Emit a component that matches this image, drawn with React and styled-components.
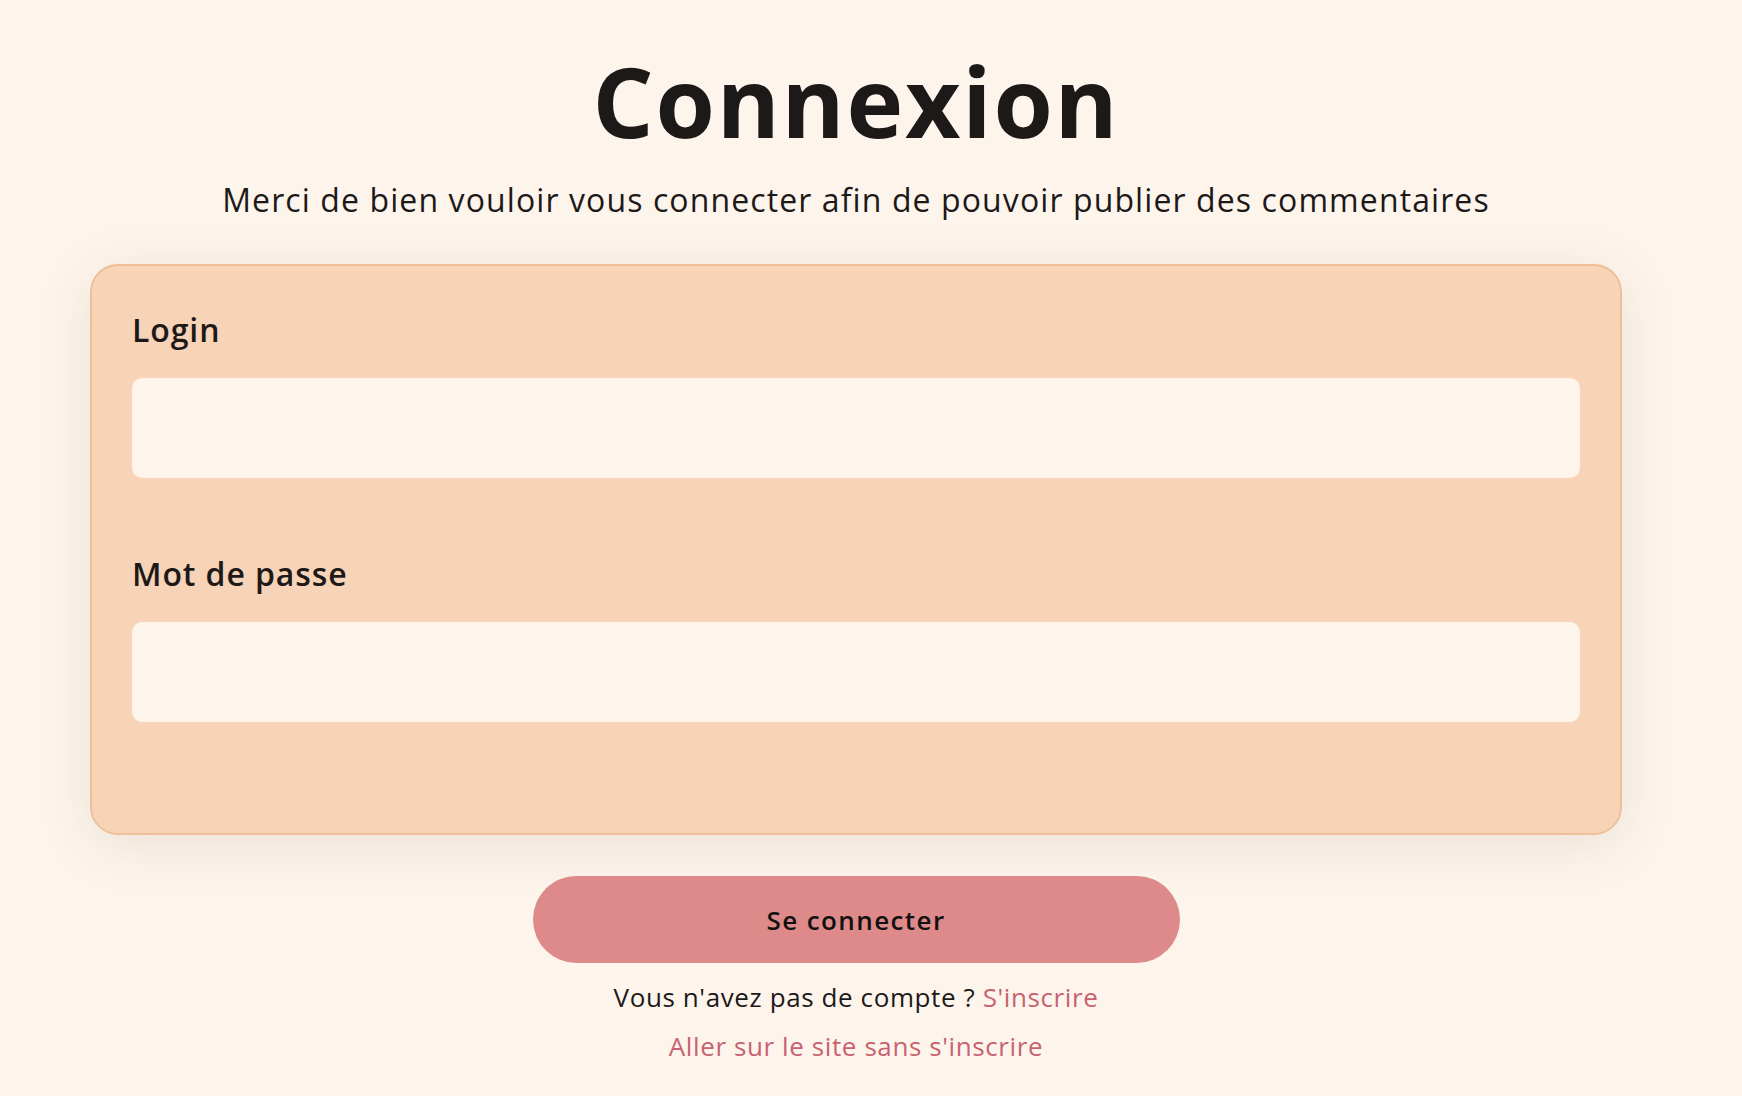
import React from "react";
import styled, { createGlobalStyle } from "styled-components";

const GlobalStyle = createGlobalStyle`
  html, body {
    margin: 0;
    padding: 0;
    background: #fdf5ec;
  }
  body {
    font-family: "Open Sans", "Liberation Sans", sans-serif;
    color: #1e1919;
  }
`;

function App() {
  return (
    <>
      <GlobalStyle />
      <Page>
        <Title>Connexion</Title>
        <Subtitle>
          Merci de bien vouloir vous connecter afin de pouvoir publier des
          commentaires
        </Subtitle>
        <Card>
          <Field>
            <Label htmlFor="login">Login</Label>
            <Input id="login" name="login" type="text" />
          </Field>
          <Field $second>
            <Label htmlFor="password">Mot de passe</Label>
            <Input id="password" name="password" type="password" />
          </Field>
        </Card>
        <Button type="button">Se connecter</Button>
        <Info>
          Vous n'avez pas de compte ? <Link href="#">S'inscrire</Link>
        </Info>
        <Info>
          <Link href="#">Aller sur le site sans s'inscrire</Link>
        </Info>
      </Page>
    </>
  );
}

export default App;

const Page = styled.main`
  display: flex;
  flex-direction: column;
  align-items: center;
  padding: 53px 120px 40px 90px;
  box-sizing: border-box;
  width: 100%;
`;

const Title = styled.h1`
  margin: 0;
  font-size: 96px;
  line-height: 96px;
  font-weight: 700;
  letter-spacing: 1.8px;
  color: #1e1919;
`;

const Subtitle = styled.p`
  margin: 31px 0 0;
  font-size: 32px;
  line-height: 40px;
  font-weight: 400;
  letter-spacing: 1.1px;
  color: #1e1919;
`;

const Card = styled.form`
  align-self: stretch;
  margin-top: 44px;
  padding: 44px 40px 111px;
  background: #f7d3b7;
  border: 2px solid #f0bf98;
  border-radius: 28px;
  box-shadow: 0 10px 55px rgba(70, 45, 30, 0.1);
  display: flex;
  flex-direction: column;
`;

const Field = styled.div`
  display: flex;
  flex-direction: column;
  gap: 28px;
  margin-top: ${(p) => (p.$second ? "76px" : "0")};
`;

const Label = styled.label`
  font-size: 32px;
  line-height: 40px;
  font-weight: 600;
  letter-spacing: 0.9px;
  color: #1e1919;
`;

const Input = styled.input`
  height: 100px;
  box-sizing: border-box;
  border: none;
  border-radius: 10px;
  background: #fdf5ec;
  padding: 0 24px;
  font-family: inherit;
  font-size: 26px;
  outline: none;
`;

const Button = styled.button`
  margin-top: 41px;
  width: 647px;
  height: 87px;
  border: none;
  border-radius: 44px;
  background: #de8a8a;
  color: #111;
  font-family: inherit;
  font-size: 26px;
  font-weight: 600;
  letter-spacing: 1.4px;
  cursor: pointer;
`;

const Info = styled.p`
  margin: 18px 0 0;
  font-size: 26px;
  line-height: 32px;
  letter-spacing: 0.6px;
  color: #1e1919;
  & + & {
    margin-top: 17px;
  }
`;

const Link = styled.a`
  color: #c8626f;
  text-decoration: none;
`;
